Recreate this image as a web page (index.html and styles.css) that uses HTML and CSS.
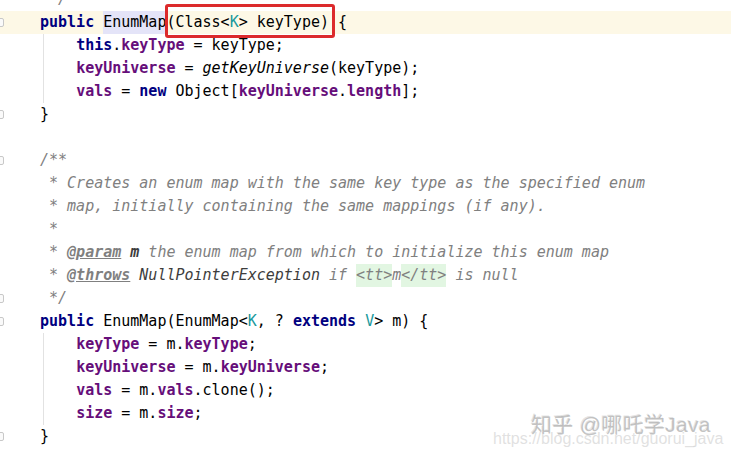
FILE: index.html
```html
<!DOCTYPE html>
<html>
<head>
<meta charset="utf-8">
<link rel="stylesheet" href="styles.css">
</head>
<body>
<div class="editor">
  <div class="line"><span class="gut"></span><span class="code"><span class="c"> */</span></span></div>
  <div class="line cur"><span class="gut"><i class="fold"></i></span><span class="code"><span class="kw">public</span> <span class="hl">EnumMap</span><span class="boxed">(Class&lt;<span class="tp">K</span>&gt; keyType)</span> {</span></div>
  <div class="line ind"><span class="gut"></span><span class="code">    <span class="kw">this</span>.<span class="f">keyType</span> = keyType;</span></div>
  <div class="line ind"><span class="gut"></span><span class="code">    <span class="f">keyUniverse</span> = <span class="it">getKeyUniverse</span>(keyType);</span></div>
  <div class="line ind"><span class="gut"></span><span class="code">    <span class="f">vals</span> = <span class="kw">new</span> Object[<span class="f">keyUniverse</span>.<span class="f">length</span>];</span></div>
  <div class="line"><span class="gut"><i class="fold"></i></span><span class="code">}</span></div>
  <div class="line"><span class="gut"></span><span class="code"></span></div>
  <div class="line"><span class="gut"><i class="fold"></i></span><span class="code"><span class="c">/**</span></span></div>
  <div class="line"><span class="gut"></span><span class="code"><span class="c"> * Creates an enum map with the same key type as the specified enum</span></span></div>
  <div class="line"><span class="gut"></span><span class="code"><span class="c"> * map, initially containing the same mappings (if any).</span></span></div>
  <div class="line"><span class="gut"></span><span class="code"><span class="c"> *</span></span></div>
  <div class="line"><span class="gut"></span><span class="code"><span class="c"> * <span class="tag">@param</span> <span class="pm">m</span> the enum map from which to initialize this enum map</span></span></div>
  <div class="line"><span class="gut"></span><span class="code"><span class="c"> * <span class="tag">@throws</span> <span class="ex">NullPointerException</span> if <span class="tt">&lt;tt&gt;</span>m<span class="tt">&lt;/tt&gt;</span> is null</span></span></div>
  <div class="line"><span class="gut"><i class="fold"></i></span><span class="code"><span class="c"> */</span></span></div>
  <div class="line"><span class="gut"><i class="fold"></i></span><span class="code"><span class="kw">public</span> EnumMap(EnumMap&lt;<span class="tp">K</span>, ? <span class="kw">extends</span> <span class="tp">V</span>&gt; m) {</span></div>
  <div class="line ind"><span class="gut"></span><span class="code">    <span class="f">keyType</span> = m.<span class="f">keyType</span>;</span></div>
  <div class="line ind"><span class="gut"></span><span class="code">    <span class="f">keyUniverse</span> = m.<span class="f">keyUniverse</span>;</span></div>
  <div class="line ind"><span class="gut"></span><span class="code">    <span class="f">vals</span> = m.<span class="f">vals</span>.clone();</span></div>
  <div class="line ind"><span class="gut"></span><span class="code">    <span class="f">size</span> = m.<span class="f">size</span>;</span></div>
  <div class="line"><span class="gut"><i class="fold"></i></span><span class="code">}</span></div>
</div>
<div class="wm-zhihu">知乎 @哪吒学Java</div>
<div class="wm-csdn">https://blog.csdn.net/guorui_java</div>
</body>
</html>
```
FILE: styles.css
```css
html, body {
  margin: 0;
  padding: 0;
  background: #ffffff;
  overflow: hidden;
}
body {
  width: 731px;
  height: 458px;
  position: relative;
}
.editor {
  margin-top: -12px;
  font-family: "DejaVu Sans Mono", "Liberation Mono", monospace;
  font-size: 15px;
  color: #000000;
}
.line {
  display: flex;
  height: 23px;
  line-height: 23px;
}
.cur {
  background: #fdf8e6;
}
.ind {
  background-image: linear-gradient(#e2e2e2, #e2e2e2);
  background-repeat: no-repeat;
  background-position: 43px 0;
  background-size: 1px 100%;
}
.gut {
  width: 40px;
  flex: none;
  display: flex;
  align-items: center;
}
.fold {
  display: block;
  width: 9px;
  height: 9px;
  box-sizing: border-box;
  border: 1px solid #c8c8c8;
  border-radius: 2px;
  margin-left: -5px;
  background: #fafafa;
}
.code {
  white-space: pre;
}
.kw {
  color: #000080;
  font-weight: bold;
}
.f {
  color: #660e7a;
  font-weight: bold;
}
.it {
  font-style: italic;
}
.tp {
  color: #20999d;
}
.hl {
  background: #e4e4f8;
  display: inline-block;
  height: 23px;
}
.boxed {
  position: relative;
  display: inline-block;
  height: 23px;
}
.boxed::after {
  content: "";
  position: absolute;
  left: -1px;
  right: -6px;
  top: -7px;
  bottom: -4px;
  border: 3px solid #dc2a2c;
  border-radius: 3px;
}
.c {
  color: #808080;
  font-style: italic;
}
.tag {
  font-weight: bold;
  text-decoration: underline;
}
.pm {
  color: #3d3d3d;
  font-weight: bold;
}
.ex {
  color: #3d3d3d;
}
.tt {
  background: #e2f6e2;
  display: inline-block;
  height: 23px;
}
.wm-zhihu {
  position: absolute;
  left: 531px;
  top: 413px;
  font-family: "Liberation Sans", "Noto Sans CJK SC", sans-serif;
  font-size: 21px;
  line-height: 23px;
  letter-spacing: 0.3px;
  color: rgba(170, 170, 170, 0.7);
  text-shadow: 1px 1px 0 rgba(255, 255, 255, 0.9), -1px -1px 0 rgba(150, 150, 150, 0.25);
  white-space: nowrap;
}
.wm-csdn {
  position: absolute;
  left: 493px;
  top: 430px;
  font-family: "Liberation Sans", sans-serif;
  font-size: 16px;
  line-height: 18px;
  color: rgba(200, 200, 200, 0.55);
  white-space: nowrap;
}
```
